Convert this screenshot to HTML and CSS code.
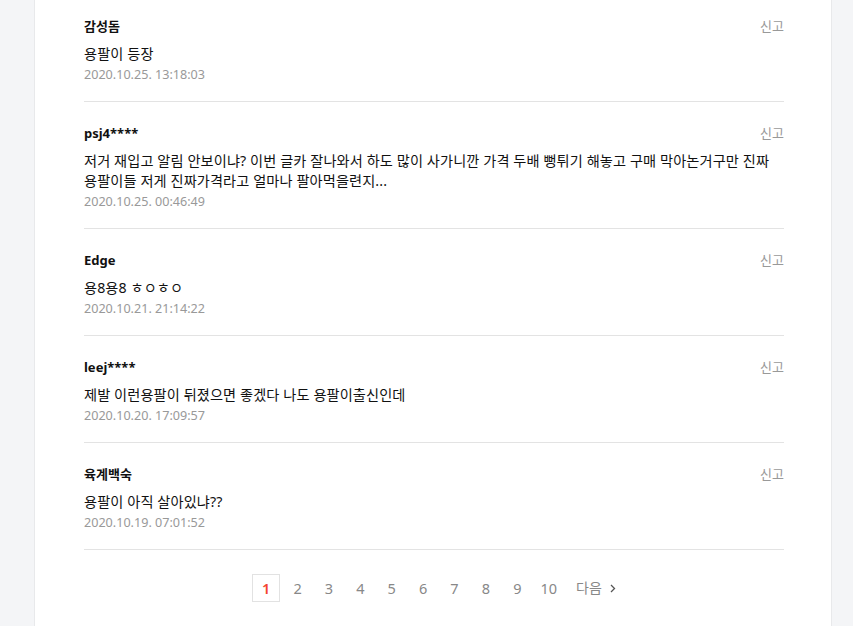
FILE: index.html
```html
<!DOCTYPE html>
<html lang="ko">
<head>
<meta charset="utf-8">
<link rel="stylesheet" href="styles.css">
</head>
<body>
<div class="panel">
  <ul class="comments">
    <li class="comment first">
      <div class="head"><span class="name">감성돔</span><a class="report">신고</a></div>
      <p class="text">용팔이 등장</p>
      <div class="date">2020.10.25. 13:18:03</div>
    </li>
    <li class="comment">
      <div class="head"><span class="name">psj4****</span><a class="report">신고</a></div>
      <p class="text">저거 재입고 알림 안보이냐? 이번 글카 잘나와서 하도 많이 사가니깐 가격 두배 뻥튀기 해놓고 구매 막아논거구만 진짜 용팔이들 저게 진짜가격라고 얼마나 팔아먹을련지...</p>
      <div class="date">2020.10.25. 00:46:49</div>
    </li>
    <li class="comment">
      <div class="head"><span class="name">Edge</span><a class="report">신고</a></div>
      <p class="text">용8용8 ㅎㅇㅎㅇ</p>
      <div class="date">2020.10.21. 21:14:22</div>
    </li>
    <li class="comment">
      <div class="head"><span class="name">leej****</span><a class="report">신고</a></div>
      <p class="text">제발 이런용팔이 뒤졌으면 좋겠다 나도 용팔이출신인데</p>
      <div class="date">2020.10.20. 17:09:57</div>
    </li>
    <li class="comment">
      <div class="head"><span class="name">육계백숙</span><a class="report">신고</a></div>
      <p class="text">용팔이 아직 살아있냐??</p>
      <div class="date">2020.10.19. 07:01:52</div>
    </li>
  </ul>
  <nav class="pager">
    <span class="page current">1</span>
    <a class="page">2</a>
    <a class="page">3</a>
    <a class="page">4</a>
    <a class="page">5</a>
    <a class="page">6</a>
    <a class="page">7</a>
    <a class="page">8</a>
    <a class="page">9</a>
    <a class="page">10</a>
    <a class="next">다음 <svg width="6" height="9" viewBox="0 0 6 9"><path d="M1 1l3.5 3.5L1 8" fill="none" stroke="#555" stroke-width="1.3"/></svg></a>
  </nav>
</div>
</body>
</html>
```
FILE: styles.css
```css
html, body {
  margin: 0;
  padding: 0;
}
body {
  background: #f4f5f7;
  font-family: "Noto Sans", "Noto Sans CJK KR", sans-serif;
  color: #111;
  height: 626px;
  overflow: hidden;
}
.panel {
  margin-left: 34px;
  width: 798px;
  min-height: 626px;
  background: #fff;
  border-left: 1px solid #e8e9eb;
  border-right: 1px solid #e8e9eb;
  padding: 0 49px;
  box-sizing: border-box;
}
.comments {
  list-style: none;
  margin: 0;
  padding: 0;
  width: 700px;
}
.comment {
  padding: 21px 0 16px;
  border-bottom: 1px solid #e3e3e3;
}
.comment.first {
  padding-top: 16px;
}
.head {
  display: flex;
  justify-content: space-between;
  align-items: center;
  height: 20px;
}
.name {
  font-size: 13px;
  font-weight: 700;
  color: #111;
  line-height: 20px;
}
.report {
  font-size: 13px;
  line-height: 20px;
  color: #999;
}
.text {
  margin: 8px 0 0;
  font-size: 14.2px;
  line-height: 20px;
  color: #111;
  letter-spacing: 0.1px;
}
.date {
  margin-top: 1px;
  font-size: 12.6px;
  line-height: 20px;
  height: 20px;
  color: #999;
}
.pager {
  display: flex;
  justify-content: center;
  align-items: center;
  gap: 3.4px;
  margin-top: 24px;
  width: 700px;
}
.page {
  width: 28px;
  height: 28px;
  box-sizing: border-box;
  display: flex;
  align-items: center;
  justify-content: center;
  font-size: 14.5px;
  color: #888;
}
.page.current {
  border: 1px solid #e2e2e2;
  color: #f4442f;
  font-weight: 600;
}
.next {
  display: flex;
  align-items: center;
  gap: 8px;
  margin-left: 10px;
  font-size: 14px;
  line-height: 28px;
  height: 28px;
  color: #888;
}
```
